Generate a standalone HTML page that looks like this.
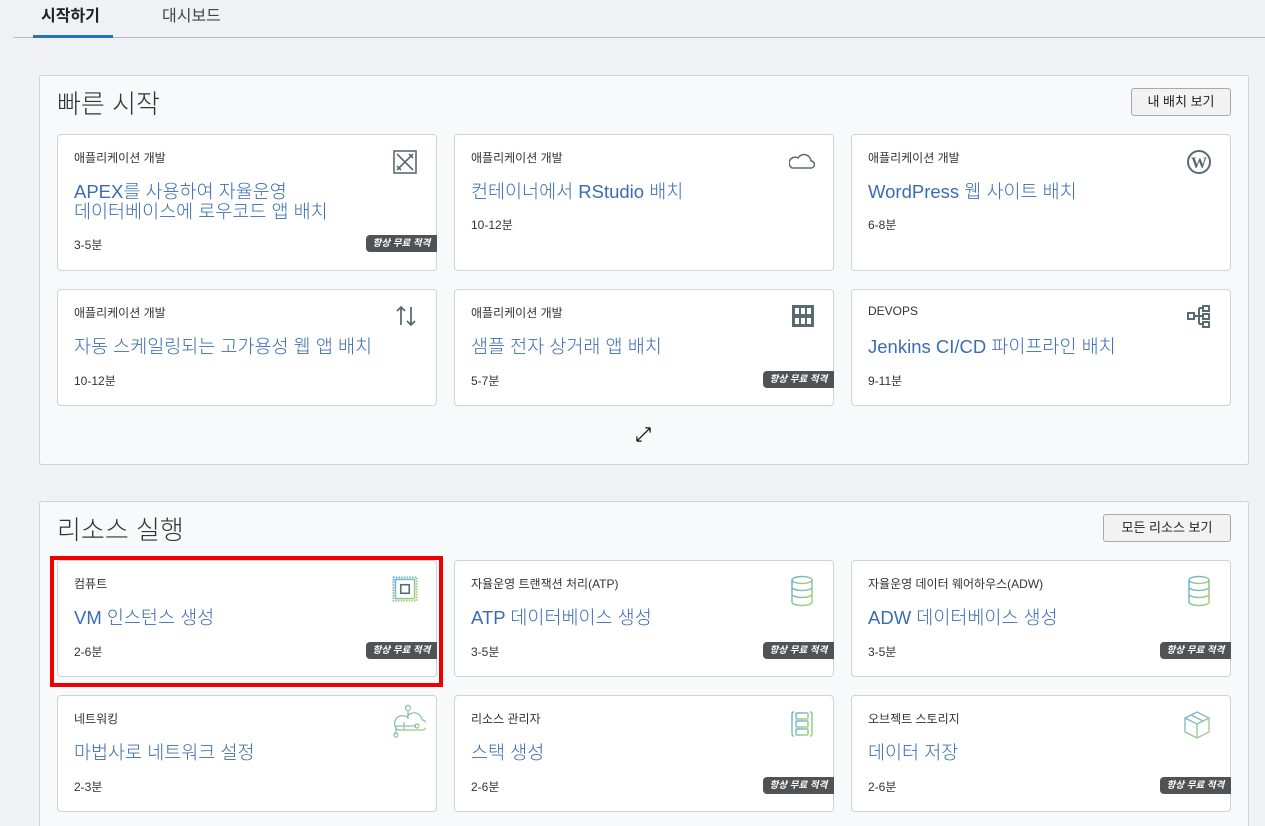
<!DOCTYPE html>
<html><head><meta charset="utf-8"><style>
*{margin:0;padding:0;box-sizing:border-box}
html,body{width:1265px;height:826px;overflow:hidden}
body{background:#f0f1f4;font-family:"Liberation Sans","Noto Sans CJK KR",sans-serif;color:#333;position:relative}
.a{position:absolute}
.tab{font-size:16px;top:2px}
.panel{position:absolute;left:39px;width:1210px;background:#f8f9fb;border:1px solid #cfd2d6;border-radius:3px}
.ptitle{position:absolute;left:17px;font-size:26px;color:#333;font-weight:300}
.btn{position:absolute;height:28px;background:#f2f2f2;border:1px solid #a8a8a8;border-radius:3px;font-size:13px;line-height:26px;text-align:center;color:#222}
.card{position:absolute;width:380px;background:#fff;border:1px solid #cfd2d6;border-radius:4px}
.cat{position:absolute;left:16px;top:14px;font-size:12px;color:#333}
.ttl{position:absolute;left:16px;top:47px;font-size:18.5px;line-height:20px;color:#3a6cb4;font-weight:300}
.tm{position:absolute;left:16px;font-size:12px;color:#333}
.bd{position:absolute;right:-1px;width:71px;height:17px;background:#505356;color:#fff;font-size:9.5px;font-style:italic;font-weight:bold;line-height:17px;text-align:center;border-radius:4px 0 0 4px}
.ic{position:absolute;right:18px;top:14px}
</style></head><body>
<div class="a tab" style="left:41px;font-weight:bold;color:#222">시작하기</div>
<div class="a tab" style="left:162px;color:#444">대시보드</div>
<div class="a" style="left:13px;top:37px;width:1252px;height:1px;background:#b8bcc2"></div>
<div class="a" style="left:33px;top:35px;width:80px;height:3px;background:#2a72b8"></div>

<div class="panel" style="top:75px;height:390px">
<div class="ptitle" style="top:8px">빠른 시작</div>
<div class="btn" style="left:1091px;top:12px;width:100px">내 배치 보기</div>
</div>

<div class="card" style="left:57px;top:134px;height:137px">
<div class="cat">애플리케이션 개발</div>
<div class="ttl">APEX를 사용하여 자율운영<br>데이터베이스에 로우코드 앱 배치</div>
<div class="tm" style="top:101px">3-5분</div><div class="bd" style="top:100px">항상 무료 적격</div>
<svg class="ic" width="26" height="26" viewBox="0 0 26 26" fill="none" stroke="#5a6b70" stroke-width="1.6"><rect x="2" y="2" width="22" height="22"/><path d="M5 5l16 16M21 5L5 21M17 5l4 4M5 17l4 4"/></svg>
</div>
<div class="card" style="left:454px;top:134px;height:137px">
<div class="cat">애플리케이션 개발</div>
<div class="ttl">컨테이너에서 RStudio 배치</div>
<div class="tm" style="top:81px">10-12분</div>
<svg class="ic" width="26" height="20" viewBox="0 0 26 20" fill="none" stroke="#5a6b70" stroke-width="1.5" style="top:16px"><path d="M3 17h19a3 3 0 0 0 0-7 7 7 0 0 0-13-3 5 5 0 0 0-6 10z"/></svg>
</div>
<div class="card" style="left:851px;top:134px;height:137px">
<div class="cat">애플리케이션 개발</div>
<div class="ttl">WordPress 웹 사이트 배치</div>
<div class="tm" style="top:81px">6-8분</div>
<svg class="ic" width="26" height="26" viewBox="0 0 26 26"><circle cx="13" cy="13" r="11" fill="none" stroke="#5a6b70" stroke-width="2"/><text x="13" y="19" font-size="16" font-family="Liberation Serif" font-weight="bold" text-anchor="middle" fill="#5a6b70">W</text></svg>
</div>

<div class="card" style="left:57px;top:289px;height:117px">
<div class="cat">애플리케이션 개발</div>
<div class="ttl">자동 스케일링되는 고가용성 웹 앱 배치</div>
<div class="tm" style="top:82px">10-12분</div>
<svg class="ic" width="24" height="24" viewBox="0 0 24 24" fill="none" stroke="#5a6b70" stroke-width="1.8"><path d="M7 21V3M3 7l4-4 4 4M17 3v18M13 17l4 4 4-4"/></svg>
</div>
<div class="card" style="left:454px;top:289px;height:117px">
<div class="cat">애플리케이션 개발</div>
<div class="ttl">샘플 전자 상거래 앱 배치</div>
<div class="tm" style="top:82px">5-7분</div><div class="bd" style="top:81px">항상 무료 적격</div>
<svg class="ic" width="24" height="24" viewBox="0 0 24 24" fill="#5a6b70"><rect x="1" y="1" width="22" height="22"/><g fill="#fff"><rect x="4" y="4" width="4" height="6"/><rect x="10" y="4" width="4" height="6"/><rect x="16" y="4" width="4" height="6"/><rect x="4" y="14" width="4" height="6"/><rect x="10" y="14" width="4" height="6"/><rect x="16" y="14" width="4" height="6"/></g></svg>
</div>
<div class="card" style="left:851px;top:289px;height:117px">
<div class="cat">DEVOPS</div>
<div class="ttl">Jenkins CI/CD 파이프라인 배치</div>
<div class="tm" style="top:82px">9-11분</div>
<svg class="ic" width="26" height="24" viewBox="0 0 26 24" fill="none" stroke="#5a6b70" stroke-width="2"><rect x="2" y="9" width="6" height="6"/><rect x="17" y="2" width="6" height="5"/><rect x="17" y="10" width="6" height="5"/><rect x="17" y="18" width="6" height="5"/><path d="M8 12h5M13 4v16M13 4h4M13 12h4M13 20h4"/></svg>
</div>
<svg class="a" style="left:635px;top:426px" width="17" height="17" viewBox="0 0 18 18" fill="none" stroke="#111" stroke-width="1.3"><path d="M2 16L16 2M2 16h5M2 16v-5M16 2h-5M16 2v5"/></svg>

<div class="panel" style="top:501px;height:330px">
<div class="ptitle" style="top:8px">리소스 실행</div>
<div class="btn" style="left:1063px;top:12px;width:128px">모든 리소스 보기</div>
</div>

<div class="card" style="left:57px;top:560px;height:117px">
<div class="cat">컴퓨트</div>
<div class="ttl">VM 인스턴스 생성</div>
<div class="tm" style="top:82px">2-6분</div><div class="bd" style="top:81px">항상 무료 적격</div>
<svg class="ic" width="30" height="32" viewBox="0 0 28 30" fill="none" stroke-width="1.5" style="right:16px;top:12px"><defs><linearGradient id="g" x1="0" y1="0" x2="1" y2="1"><stop offset="0" stop-color="#6ab0e0"/><stop offset="1" stop-color="#a8d46c"/></linearGradient></defs><rect x="3" y="4" width="22" height="22" stroke="url(#g)" stroke-dasharray="1.5 1"/><rect x="5" y="6" width="18" height="18" stroke="url(#g)"/><rect x="10" y="11" width="8" height="8" stroke="#5a6b70"/></svg>
</div>
<div class="card" style="left:454px;top:560px;height:117px">
<div class="cat">자율운영 트랜잭션 처리(ATP)</div>
<div class="ttl">ATP 데이터베이스 생성</div>
<div class="tm" style="top:82px">3-5분</div><div class="bd" style="top:81px">항상 무료 적격</div>
<svg class="ic" width="26" height="32" viewBox="0 0 26 32" fill="none" stroke="url(#g)" stroke-width="1.5"><ellipse cx="13" cy="5" rx="10" ry="3.5"/><path d="M3 5v22c0 2 4.5 3.5 10 3.5s10-1.5 10-3.5V5M3 12c0 2 4.5 3.5 10 3.5s10-1.5 10-3.5M3 19c0 2 4.5 3.5 10 3.5s10-1.5 10-3.5"/></svg>
</div>
<div class="card" style="left:851px;top:560px;height:117px">
<div class="cat">자율운영 데이터 웨어하우스(ADW)</div>
<div class="ttl">ADW 데이터베이스 생성</div>
<div class="tm" style="top:82px">3-5분</div><div class="bd" style="top:81px">항상 무료 적격</div>
<svg class="ic" width="26" height="32" viewBox="0 0 26 32" fill="none" stroke="url(#g)" stroke-width="1.5"><ellipse cx="13" cy="5" rx="10" ry="3.5"/><path d="M3 5v22c0 2 4.5 3.5 10 3.5s10-1.5 10-3.5V5M3 12c0 2 4.5 3.5 10 3.5s10-1.5 10-3.5M3 19c0 2 4.5 3.5 10 3.5s10-1.5 10-3.5"/></svg>
</div>

<div class="card" style="left:57px;top:695px;height:117px">
<div class="cat">네트워킹</div>
<div class="ttl">마법사로 네트워크 설정</div>
<div class="tm" style="top:82px">2-3분</div>
<svg class="ic" width="36" height="36" viewBox="0 0 36 36" fill="none" stroke="url(#g)" stroke-width="1.2" style="right:10px;top:8px"><circle cx="18" cy="4" r="2.5"/><path d="M18 7v8M8 26h24a5 5 0 0 0 0-10 8 8 0 0 0-15-3 6 6 0 0 0-9 13zM6 22h20M14 18v8M6 22v8"/><circle cx="27" cy="22" r="2"/><circle cx="6" cy="31" r="2"/></svg>
</div>
<div class="card" style="left:454px;top:695px;height:117px">
<div class="cat">리소스 관리자</div>
<div class="ttl">스택 생성</div>
<div class="tm" style="top:82px">2-6분</div><div class="bd" style="top:81px">항상 무료 적격</div>
<svg class="ic" width="26" height="28" viewBox="0 0 26 28" fill="none" stroke="url(#g)" stroke-width="1.5"><path d="M5 2Q3 2 3 4v20q0 2 2 2M21 2q2 0 2 2v20q0 2-2 2"/><rect x="7" y="3" width="12" height="6" rx="1"/><rect x="7" y="11" width="12" height="6" rx="1"/><rect x="7" y="19" width="12" height="6" rx="1"/></svg>
</div>
<div class="card" style="left:851px;top:695px;height:117px">
<div class="cat">오브젝트 스토리지</div>
<div class="ttl">데이터 저장</div>
<div class="tm" style="top:82px">2-6분</div><div class="bd" style="top:81px">항상 무료 적격</div>
<svg class="ic" width="30" height="30" viewBox="0 0 30 30" fill="none" stroke="url(#g)" stroke-width="1.3"><path d="M15 2l12 6v14l-12 6-12-6V8zM3 8l12 6 12-6M15 14v14M9 5l12 6"/></svg>
</div>

<div class="a" style="left:50px;top:556px;width:393px;height:131px;border:4px solid #e00"></div>
</body></html>
